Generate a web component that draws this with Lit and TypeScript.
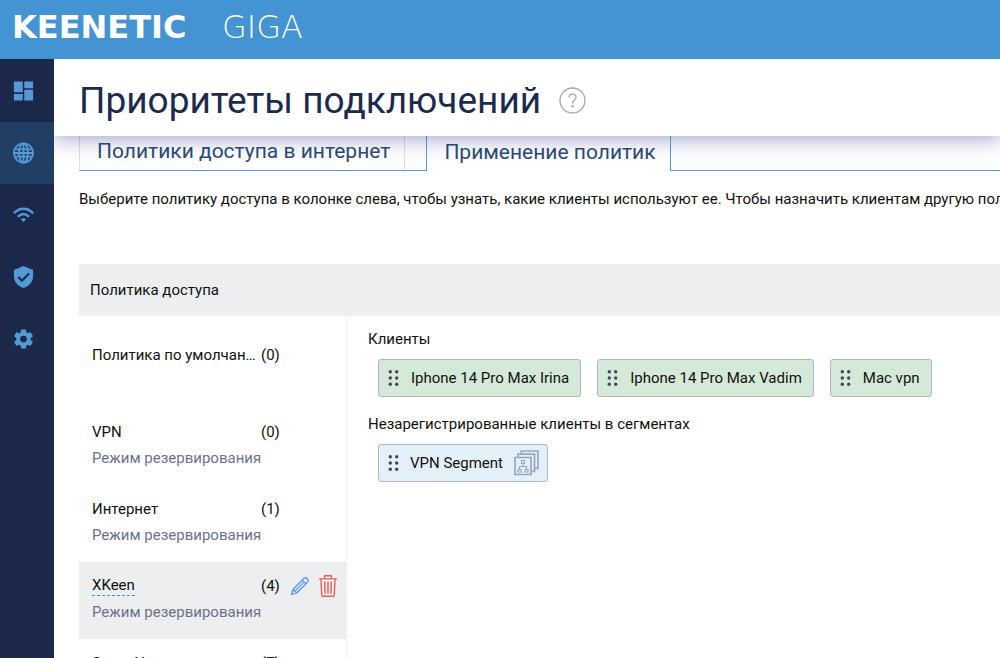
import { LitElement, html, css, svg } from "lit";
import { customElement, state } from "lit/decorators.js";

interface Policy {
  name: string;
  count: number;
  mode: string;
}

const RESERVE = "Режим резервирования";

const POLICIES: Policy[] = [
  { name: "Политика по умолчан…", count: 0, mode: "" },
  { name: "VPN", count: 0, mode: RESERVE },
  { name: "Интернет", count: 1, mode: RESERVE },
  { name: "XKeen", count: 4, mode: RESERVE },
  { name: "Super New", count: 7, mode: RESERVE },
];

const CLIENTS = ["Iphone 14 Pro Max Irina", "Iphone 14 Pro Max Vadim", "Mac vpn"];

const NAV = [
  { label: "Панель", icon: svg`<path fill="currentColor" d="M2 13.200h9.200V2H2zm0 8.800h9.200v-7H2zm10.800 0H22V10.800h-9.200zm0-20v7H22V2z"/>` },
  {
    label: "Интернет",
    icon: svg`<g fill="none" stroke="currentColor" stroke-width="1.900"><circle cx="12" cy="12" r="10"/><ellipse cx="12" cy="12" rx="4.700" ry="10"/><path d="M12 2v20M3.500 8.200h17M3.500 15.800h17M2 12h20"/></g>`,
  },
  {
    label: "Wi-Fi",
    icon: svg`<g fill="none" stroke="currentColor" stroke-width="2.500" stroke-linecap="round"><path d="M2.600 9.600C8 4.200 16 4.200 21.400 9.600"/><path d="M6.900 13.300C10 10.500 14 10.500 17.100 13.300"/></g><path fill="currentColor" d="M9.200 16.400c1.600-1.500 4-1.500 5.600 0L12 19.200z"/>`,
  },
  {
    label: "Безопасность",
    icon: svg`<path fill="currentColor" d="M12 .5 2 4.600v6.600c0 5.700 4.200 10.700 10 12.300 5.800-1.600 10-6.600 10-12.300V4.600z"/><path class="cut" fill="none" stroke-width="2.200" d="m6.500 12 3.800 3.800L17.800 8.300"/>`,
  },
  {
    label: "Управление",
    icon: svg`<path fill="currentColor" d="M19.430 12.980c.04-.32.07-.64.07-.98s-.03-.66-.07-.98l2.110-1.650c.19-.15.24-.42.12-.64l-2-3.460c-.12-.22-.39-.3-.61-.22l-2.490 1c-.52-.4-1.080-.73-1.690-.98l-.38-2.650A.488.488 0 0 0 14 2h-4c-.25 0-.46.18-.49.42l-.38 2.650c-.61.25-1.170.59-1.690.98l-2.490-1c-.23-.09-.49 0-.61.22l-2 3.460c-.13.22-.07.49.12.64l2.110 1.650c-.04.32-.07.65-.07.98s.03.66.07.98l-2.110 1.650c-.19.15-.24.42-.12.64l2 3.460c.12.22.39.3.61.22l2.490-1c.52.4 1.080.73 1.690.98l.38 2.650c.03.24.24.42.49.42h4c.25 0 .46-.18.49-.42l.38-2.650c.61-.25 1.170-.59 1.690-.98l2.490 1c.23.09.49 0 .61-.22l2-3.460c.12-.22.07-.49-.12-.64zM12 15.500a3.500 3.500 0 1 1 0-7 3.500 3.500 0 0 1 0 7z"/>`,
  },
];

@customElement("app-root")
export class AppRoot extends LitElement {
  @state() private selected = 3;
  @state() private section = 1;

  static styles = css`
    :host {
      display: flex;
      flex-direction: column;
      height: 100vh;
      overflow: hidden;
      background: #fff;
      color: #111;
      font: 15px/20px Roboto, "Noto Sans", sans-serif;
    }
    button {
      font: inherit;
      color: inherit;
      border: 0;
      background: none;
      padding: 0;
      text-align: left;
      cursor: pointer;
    }
    svg {
      display: block;
    }
    .top {
      flex: none;
      height: 59px;
      box-sizing: border-box;
      padding: 0 12px 6px;
      display: flex;
      align-items: center;
      gap: 20px;
      background: #4494d4;
      color: #fff;
      font: 32px/36px "DejaVu Sans", sans-serif;
    }
    .brand {
      font-weight: 700;
      flex: none;
      width: 190px;
    }
    .model {
      font-weight: 200;
    }
    .body {
      flex: 1;
      min-height: 0;
      display: flex;
    }
    .side {
      flex: none;
      width: 54px;
      padding-top: 1px;
      background: #1c2849;
      color: #539ad6;
    }
    .nav {
      display: flex;
      align-items: center;
      width: 100%;
      height: 62px;
      padding-left: 12px;
    }
    .nav.on {
      background: #213f64;
    }
    .cut {
      stroke: #1c2849;
    }
    .main {
      flex: 1;
      min-width: 0;
      display: flex;
      flex-direction: column;
      overflow: hidden;
    }
    .title {
      position: relative;
      flex: none;
      display: flex;
      align-items: center;
      gap: 18px;
      height: 77px;
      box-sizing: border-box;
      padding: 6px 25px 0;
      background: #fff;
      box-shadow: 0 2px 20px rgba(50, 60, 140, 0.5);
    }
    h1 {
      margin: 0;
      font-size: 37px;
      line-height: 48px;
      font-weight: 400;
      color: #1c2a4d;
    }
    .tabs {
      flex: none;
      display: flex;
      height: 35px;
      margin-left: 25px;
      color: #2c4a73;
      font-size: 21px;
      line-height: 24px;
    }
    .tab {
      box-sizing: border-box;
      padding: 0 14px 4px 17px;
    }
    .tab.idle {
      border-left: 1px solid #dcdfea;
      border-right: 1px solid #dcdfea;
      border-bottom: 1px solid #4c9fdb;
    }
    .gap {
      box-sizing: border-box;
      width: 22px;
      border-right: 1px solid #4c9fdb;
      border-bottom: 1px solid #4c9fdb;
    }
    .rest {
      flex: 1;
      border-left: 1px solid #4c9fdb;
      border-bottom: 1px solid #4c9fdb;
    }
    .hint {
      flex: none;
      margin: 18px 0 55px 25px;
      white-space: nowrap;
    }
    .caption {
      flex: none;
      margin-left: 25px;
      padding: 16px 11px;
      background: #edeef0;
    }
    .panes {
      flex: 1;
      min-height: 0;
      display: flex;
      margin-left: 25px;
    }
    .list {
      flex: none;
      width: 267px;
      margin: 0;
      padding: 15px 0 0;
      list-style: none;
      border-right: 1px solid #edeef0;
    }
    .row {
      display: grid;
      grid-template-columns: 166px 26px 26px 20px;
      grid-template-rows: 20px 20px;
      column-gap: 3px;
      row-gap: 6px;
      align-items: center;
      height: 77px;
      box-sizing: border-box;
      padding: 14px 0 0 13px;
    }
    .row.on {
      background: #edeef0;
    }
    .name {
      overflow: hidden;
      text-overflow: ellipsis;
      white-space: nowrap;
    }
    .row.on .name {
      justify-self: start;
      border-bottom: 1px dashed #4494d4;
      line-height: 19px;
    }
    .mode {
      grid-row: 2;
      grid-column: 1 / -1;
      color: #6d7189;
    }
    .edit {
      color: #5a93f0;
    }
    .del {
      color: #e8605a;
    }
    .assign {
      flex: 1;
      min-width: 0;
      padding: 13px 0 0 21px;
    }
    h2 {
      margin: 0;
      font-size: 15px;
      line-height: 20px;
      font-weight: 400;
    }
    .chips {
      display: flex;
      flex-wrap: wrap;
      gap: 16px;
      padding: 10px 0 17px 10px;
    }
    .chip {
      display: flex;
      align-items: center;
      gap: 12px;
      height: 38px;
      box-sizing: border-box;
      padding: 0 11px 0 9px;
      border: 1px solid #b0b8c4;
      border-radius: 3px;
      background: #d5e9d9;
      white-space: nowrap;
    }
    .chip.segment {
      gap: 11px;
      padding-right: 8px;
      background: #e3f0f9;
    }
  `;

  private handle() {
    return html`<svg width="11" height="18" viewBox="0 0 11 18" fill="#474559" aria-hidden="true">
      ${[2.7, 9, 15.3].map((y) => svg`<circle cx="2.300" cy=${y} r="1.700"/><circle cx="8.700" cy=${y} r="1.700"/>`)}
    </svg>`;
  }

  private row(p: Policy, i: number) {
    const on = i === this.selected;
    return html`<li class="row ${on ? "on" : ""}">
      <button class="name" @click=${() => (this.selected = i)}>${p.name}</button>
      <span>(${p.count})</span>
      ${on
        ? html`<button class="edit" aria-label="Изменить">
              <svg width="20" height="20" viewBox="0 0 20 20" fill="none" stroke="currentColor" stroke-width="1.300" stroke-linejoin="round">
                <path d="M1.500 18.500 3 13.300 14 2.300q1.400-1.200 2.700 0l1 1q1.200 1.300 0 2.700L6.700 17zM12.200 4.100l3.700 3.700M3 13.300l3.700 3.700M4.900 15.100 14 5.900" />
              </svg>
            </button>
            <button class="del" aria-label="Удалить">
              <svg width="18" height="22" viewBox="0 0 18 22" fill="none" stroke="currentColor" stroke-width="1.400">
                <path d="M0 3.900h18M5.500 3.700V1.200q0-.5.500-.5h6q.5 0 .5.500v2.500M1.900 4l.8 16.300q0 1 1 1h10.600q1 0 1-1L16.100 4M5.700 6.500l.4 12.300M9 6.500v12.300M12.300 6.500l-.4 12.300" />
              </svg>
            </button>`
        : ""}
      <span class="mode">${p.mode}</span>
    </li>`;
  }

  render() {
    return html`
      <header class="top"><span class="brand">KEENETIC</span><span class="model">GIGA</span></header>
      <div class="body">
        <nav class="side">
          ${NAV.map(
            (n, i) => html`<button class="nav ${i === this.section ? "on" : ""}" aria-label=${n.label} @click=${() => (this.section = i)}>
              <svg width="23" height="24" viewBox="0 0 24 24">${n.icon}</svg>
            </button>`
          )}
        </nav>
        <main class="main">
          <div class="title">
            <h1>Приоритеты подключений</h1>
            <button aria-label="Справка">
              <svg width="27" height="27" viewBox="0 0 27 27" fill="none" stroke="#a5a5a8" stroke-width="1.300">
                <circle cx="13.500" cy="13.500" r="12.500" />
                <path d="M10.100 10.500c0-4.500 6.900-4.500 6.900-.3 0 2.700-3.500 2.900-3.500 6.400" />
                <circle cx="13.500" cy="19.300" r=".6" fill="#a5a5a8" />
              </svg>
            </button>
          </div>
          <div class="tabs">
            <button class="tab idle">Политики доступа в интернет</button>
            <span class="gap"></span>
            <button class="tab">Применение политик</button>
            <span class="rest"></span>
          </div>
          <p class="hint">
            Выберите политику доступа в колонке слева, чтобы узнать, какие клиенты используют ее. Чтобы назначить клиентам другую политику, перетащите их.
          </p>
          <div class="caption">Политика доступа</div>
          <div class="panes">
            <ul class="list">
              ${POLICIES.map((p, i) => this.row(p, i))}
            </ul>
            <section class="assign">
              <h2>Клиенты</h2>
              <div class="chips">${CLIENTS.map((c) => html`<div class="chip">${this.handle()}<span>${c}</span></div>`)}</div>
              <h2>Незарегистрированные клиенты в сегментах</h2>
              <div class="chips">
                <div class="chip segment">
                  ${this.handle()}<span>VPN Segment</span>
                  <svg width="25" height="26" viewBox="0 0 25 26" fill="none" stroke="#98a7b7" stroke-width="1.700" aria-hidden="true">
                    <path d="M1 7.500h16v17H1zM4 7V4.200h16.500v17.300H17.500M7.300 4V1h16.700v17.500h-3" />
                    <path stroke-width="1.100" d="M7.500 10.500h3v3h-3zM9 13.500v3M5.500 19.500v-3h7v3M4 19.500h3v2.500H4zM11 19.500h3v2.500h-3z" />
                  </svg>
                </div>
              </div>
            </section>
          </div>
        </main>
      </div>
    `;
  }
}
